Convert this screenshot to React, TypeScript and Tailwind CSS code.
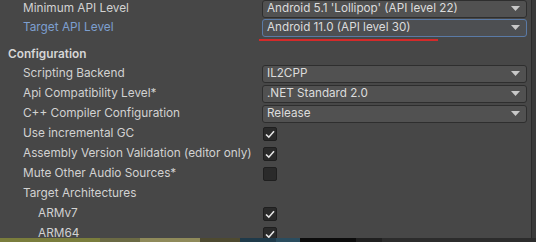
type Row =
  | { kind: 'dropdown'; label: string; value: string; focused?: boolean; indent?: number }
  | { kind: 'check'; label: string; checked: boolean; indent?: number }
  | { kind: 'label'; label: string; indent?: number }

const rows: Row[] = [
  { kind: 'dropdown', label: 'Scripting Backend', value: 'IL2CPP' },
  { kind: 'dropdown', label: 'Api Compatibility Level*', value: '.NET Standard 2.0' },
  { kind: 'dropdown', label: 'C++ Compiler Configuration', value: 'Release' },
  { kind: 'check', label: 'Use incremental GC', checked: true },
  { kind: 'check', label: 'Assembly Version Validation (editor only)', checked: true },
  { kind: 'check', label: 'Mute Other Audio Sources*', checked: false },
  { kind: 'label', label: 'Target Architectures' },
  { kind: 'check', label: 'ARMv7', checked: true, indent: 1 },
  { kind: 'check', label: 'ARM64', checked: true, indent: 1 },
]

function Dropdown({ value, focused }: { value: string; focused?: boolean }) {
  return (
    <div
      className={`flex h-[18px] flex-1 items-center justify-between rounded-[3px] border pl-[4px] pr-[6px] ${
        focused ? 'border-[#5a7aa6] bg-[#4d4f52]' : 'border-[#2e2e2e] bg-[#515151]'
      }`}
    >
      <span className="whitespace-nowrap text-[11.7px] text-[#dcdcdc]">{value}</span>
      <svg width="9" height="6" viewBox="0 0 9 6">
        <path d="M0 0 L9 0 L4.5 5 Z" fill="#c8c8c8" />
      </svg>
    </div>
  )
}

function Checkbox({ checked }: { checked: boolean }) {
  return (
    <div className="flex h-[14px] w-[14px] items-center justify-center rounded-[2px] border border-[#1f1f1f] bg-[#2a2a2a]">
      {checked && (
        <svg width="10" height="9" viewBox="0 0 10 9">
          <path d="M1 4.5 L3.8 7.2 L9 1.2" stroke="#e6e6e6" strokeWidth="1.6" fill="none" />
        </svg>
      )}
    </div>
  )
}

function FieldRow({ row }: { row: Row }) {
  const pad = row.indent ? 'pl-[38px]' : 'pl-[23px]'
  return (
    <div className="flex h-[20px] shrink-0 items-center">
      <div className={`w-[262px] shrink-0 whitespace-nowrap ${pad} text-[#d2d2d2]`}>{row.label}</div>
      {row.kind === 'dropdown' && <Dropdown value={row.value} focused={row.focused} />}
      {row.kind === 'check' && (
        <div className="pl-[1px]">
          <Checkbox checked={row.checked} />
        </div>
      )}
    </div>
  )
}

export default function App() {
  return (
    <div
      className="flex h-[242px] w-[536px] flex-col overflow-hidden bg-[#3a3a3a] text-[11.8px] leading-none"
      style={{ fontFamily: 'Inter, "Noto Sans", sans-serif' }}
    >
      <div className="flex min-h-0 flex-1 overflow-hidden">
        <div className="flex w-[531px] flex-col bg-[#474747] pr-[4px]">
          <div className="flex h-[18px] shrink-0 items-center">
            <div className="w-[262px] shrink-0 whitespace-nowrap pl-[23px] text-[#d2d2d2]">Minimum API Level</div>
            <Dropdown value="Android 5.1 'Lollipop' (API level 22)" />
          </div>
          <div className="flex h-[20px] shrink-0 items-center">
            <div className="w-[262px] shrink-0 whitespace-nowrap pl-[23px] text-[#7d9fd0]">Target API Level</div>
            <Dropdown value="Android 11.0 (API level 30)" focused />
          </div>
          <div className="ml-[259px] mt-[1px] h-[2px] w-[179px] shrink-0 bg-[#d42a2a]" />
          <div className="h-[23px] shrink-0 pl-[8px] pt-[8px] font-semibold text-[#d6d6d6]">Configuration</div>
          {rows.map((row) => (
            <FieldRow key={row.label} row={row} />
          ))}
        </div>
        <div className="w-[1px] bg-[#2b2b2b]" />
      </div>
      <div className="flex h-[4px] shrink-0">
        <div className="w-[100px] bg-[#7a7d3c]" />
        <div className="w-[40px] bg-[#6b6a44]" />
        <div className="w-[60px] bg-[#8f8a5a]" />
        <div className="w-[40px] bg-[#4e4a30]" />
        <div className="w-[36px] bg-[#1f3a4a]" />
        <div className="w-[24px] bg-[#2a4c5e]" />
        <div className="w-[56px] bg-[#0c0c0c]" />
        <div className="w-[26px] bg-[#202020]" />
        <div className="flex-1 bg-[#2c2c2c]" />
      </div>
    </div>
  )
}
